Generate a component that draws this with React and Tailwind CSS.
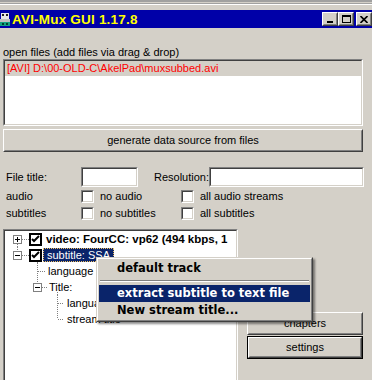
import React from 'react';

const Raised = ({ className = '', children }) => (
  <div className={`border border-t-white border-l-white border-b-[#404040] border-r-[#404040] ${className}`}>
    <div className="w-full h-full border border-t-[#d4d0c8] border-l-[#d4d0c8] border-b-[#808080] border-r-[#808080] flex items-center justify-center">
      {children}
    </div>
  </div>
);

const Sunken = ({ className = '', children }) => (
  <div className={`border border-t-[#808080] border-l-[#808080] border-b-white border-r-white ${className}`}>
    <div className="w-full h-full border border-t-[#404040] border-l-[#404040] border-b-[#d4d0c8] border-r-[#d4d0c8] bg-white overflow-hidden">
      {children}
    </div>
  </div>
);

const Check = ({ label }) => (
  <div className="flex items-center gap-[6px]">
    <Sunken className="w-[13px] h-[13px]" />
    <span>{label}</span>
  </div>
);

const Dots = ({ x1, y1, x2, y2 }) => (
  <line x1={x1} y1={y1} x2={x2} y2={y2} stroke="#808080" strokeDasharray="1 1" shapeRendering="crispEdges" />
);

const Expander = ({ x, open }) => (
  <g shapeRendering="crispEdges">
    <rect x={x + 0.5} y={4.5} width={8} height={8} fill="white" stroke="#808080" />
    <line x1={x + 2} y1={8.5} x2={x + 7} y2={8.5} stroke="black" />
    {!open && <line x1={x + 4.5} y1={6} x2={x + 4.5} y2={11} stroke="black" />}
  </g>
);

const TreeCheck = () => (
  <div className="w-[13px] h-[13px] border-2 border-black bg-white flex items-center justify-center shrink-0">
    <svg width="9" height="9" viewBox="0 0 9 9">
      <path d="M1 4 L3 6 L8 1" stroke="black" strokeWidth="2" fill="none" />
    </svg>
  </div>
);

export default function App() {
  return (
    <div
      className="w-[372px] h-[380px] overflow-hidden relative bg-[#d4d0c8] text-black text-[11px] leading-[13px]"
      style={{ fontFamily: '"Liberation Sans", Arial, sans-serif' }}
    >
      {/* window frame top */}
      <div className="h-[2px] bg-[#a0a0a0]" />
      <div className="h-[1px] bg-[#d4d0c8]" />
      <div className="h-[1px] bg-[#a0a0a0]" />
      <div className="h-[1px] bg-white" />
      <div className="h-[5px] bg-[#d4d0c8]" />

      {/* title bar */}
      <div className="h-[18px] bg-[#0000a8] flex items-center">
        <svg width="11" height="16" viewBox="0 0 11 16" className="shrink-0">
          <rect x="0" y="0" width="11" height="16" fill="#0000a8" />
          <rect x="1" y="2" width="8" height="6" fill="#e8e8e8" />
          <rect x="2" y="3" width="2" height="2" fill="#202020" />
          <rect x="6" y="3" width="2" height="2" fill="#202020" />
          <rect x="0" y="8" width="10" height="3" fill="#c0c0c0" />
          <rect x="0" y="11" width="10" height="4" fill="#10a080" />
          <rect x="2" y="12" width="2" height="2" fill="#004030" />
          <rect x="6" y="12" width="2" height="2" fill="#004030" />
        </svg>
        <span className="ml-[1px] text-[13.5px] font-bold text-[#ffff00] tracking-[0.2px]">
          AVI-Mux GUI 1.17.8
        </span>
        <div className="ml-auto flex items-center">
          <Raised className="w-[16px] h-[14px] bg-[#d4d0c8]">
            <div className="w-[6px] h-[2px] bg-black mt-[6px] -ml-[1px]" />
          </Raised>
          <Raised className="w-[16px] h-[14px] bg-[#d4d0c8]">
            <div className="w-[9px] h-[8px] border border-black border-t-2" />
          </Raised>
          <Raised className="ml-[2px] w-[16px] h-[14px] bg-[#d4d0c8]">
            <svg width="8" height="7" viewBox="0 0 8 7">
              <path d="M0.5 0 L7.5 7 M7.5 0 L0.5 7" stroke="black" strokeWidth="1.6" />
            </svg>
          </Raised>
        </div>
      </div>

      {/* body */}
      <div className="pl-[3px] pr-[9px]">
        <div className="mt-[18px] h-[13px]">open files (add files via drag &amp; drop)</div>

        <Sunken className="h-[67px]">
          <div className="h-[15px] bg-[#d4d0c8] text-[#ff0000] px-[2px] leading-[15px]">
            [AVI] D:\00-OLD-C\AkelPad\muxsubbed.avi
          </div>
        </Sunken>

        <Raised className="mt-[3px] h-[23px]">
          <span>generate data source from files</span>
        </Raised>

        <div className="mt-[15px] flex items-center h-[20px]">
          <span className="w-[78px] pl-[3px]">File title:</span>
          <Sunken className="w-[57px] h-[20px]" />
          <span className="ml-[16px] w-[55px]">Resolution:</span>
          <Sunken className="flex-1 h-[20px] -mr-[1px]" />
        </div>

        <div className="mt-[3px] flex items-center h-[13px]">
          <span className="w-[78px] pl-[3px]">audio</span>
          <div className="w-[100px]">
            <Check label="no audio" />
          </div>
          <Check label="all audio streams" />
        </div>

        <div className="mt-[4px] flex items-center h-[13px]">
          <span className="w-[78px] pl-[3px]">subtitles</span>
          <div className="w-[100px]">
            <Check label="no subtitles" />
          </div>
          <Check label="all subtitles" />
        </div>

        <div className="mt-[9px] flex">
          <Sunken className="w-[235px] h-[170px] shrink-0">
            {/* video */}
            <div className="h-[16px] flex items-center">
              <svg width="24" height="16" className="shrink-0 overflow-visible">
                <Dots x1={12.5} y1={13} x2={12.5} y2={16} />
                <Dots x1={17} y1={8.5} x2={24} y2={8.5} />
                <Expander x={8} open={false} />
              </svg>
              <TreeCheck />
              <span className="ml-[1px] px-[3px] font-bold whitespace-nowrap text-[11.5px]">
                video: FourCC: vp62 (494 kbps, 1
              </span>
            </div>
            {/* subtitle */}
            <div className="h-[16px] flex items-center">
              <svg width="24" height="16" className="shrink-0 overflow-visible">
                <Dots x1={12.5} y1={0} x2={12.5} y2={4} />
                <Dots x1={17} y1={8.5} x2={24} y2={8.5} />
                <Dots x1={32.5} y1={15} x2={32.5} y2={16} />
                <Expander x={8} open />
              </svg>
              <TreeCheck />
              <span className="ml-[1px] px-[3px] h-[14px] leading-[13px] bg-[#0a246a] text-white border border-dotted border-[#f0c060] whitespace-nowrap">
                subtitle: SSA
              </span>
            </div>
            {/* language */}
            <div className="h-[16px] flex items-center">
              <svg width="40" height="16" className="shrink-0">
                <Dots x1={32.5} y1={0} x2={32.5} y2={16} />
                <Dots x1={33} y1={8.5} x2={41} y2={8.5} />
              </svg>
              <span className="px-[3px] whitespace-nowrap">language</span>
            </div>
            {/* Title */}
            <div className="h-[16px] flex items-center">
              <svg width="40" height="16" className="shrink-0 overflow-visible">
                <Dots x1={32.5} y1={0} x2={32.5} y2={4} />
                <Dots x1={37} y1={8.5} x2={42} y2={8.5} />
                <Dots x1={52.5} y1={13} x2={52.5} y2={16} />
                <Expander x={28} open />
              </svg>
              <span className="ml-[1px] px-[3px] whitespace-nowrap">Title:</span>
            </div>
            {/* level 2 */}
            <div className="h-[16px] flex items-center">
              <svg width="59" height="16" className="shrink-0">
                <Dots x1={52.5} y1={0} x2={52.5} y2={16} />
                <Dots x1={53} y1={8.5} x2={60} y2={8.5} />
              </svg>
              <span className="px-[3px] whitespace-nowrap">language</span>
            </div>
            <div className="h-[16px] flex items-center">
              <svg width="59" height="16" className="shrink-0">
                <Dots x1={52.5} y1={0} x2={52.5} y2={8} />
                <Dots x1={53} y1={8.5} x2={60} y2={8.5} />
              </svg>
              <span className="px-[3px] whitespace-nowrap">stream title</span>
            </div>
          </Sunken>

          <div className="ml-[9px] flex-1 pt-[83px] flex flex-col gap-[1px]">
            <Raised className="h-[23px]">
              <span>chapters</span>
            </Raised>
            <div className="border border-black">
              <Raised className="h-[21px]">
                <span>settings</span>
              </Raised>
            </div>
          </div>
        </div>
      </div>

      {/* context menu */}
      <div
        className="absolute left-[96px] top-[257px] w-[217px] h-[65px] bg-[#d4d0c8] border border-t-[#d4d0c8] border-l-[#d4d0c8] border-b-[#404040] border-r-[#404040] shadow-[2px_2px_2px_rgba(0,0,0,0.45)]"
        style={{ fontFamily: '"DejaVu Sans", Verdana, sans-serif' }}
      >
        <div className="w-full h-full border border-t-white border-l-white border-b-[#808080] border-r-[#808080] p-[1px] font-bold text-[11.5px]">
          <div className="h-[17px] leading-[17px] pl-[18px]">default track</div>
          <div className="h-[8px] flex items-center px-[1px]">
            <div className="w-full h-[2px] border-t border-t-[#808080] border-b border-b-white" />
          </div>
          <div className="h-[17px] leading-[17px] pl-[18px] bg-[#0a246a] text-white">extract subtitle to text file</div>
          <div className="h-[17px] leading-[17px] pl-[18px]">New stream title...</div>
        </div>
      </div>
    </div>
  );
}
